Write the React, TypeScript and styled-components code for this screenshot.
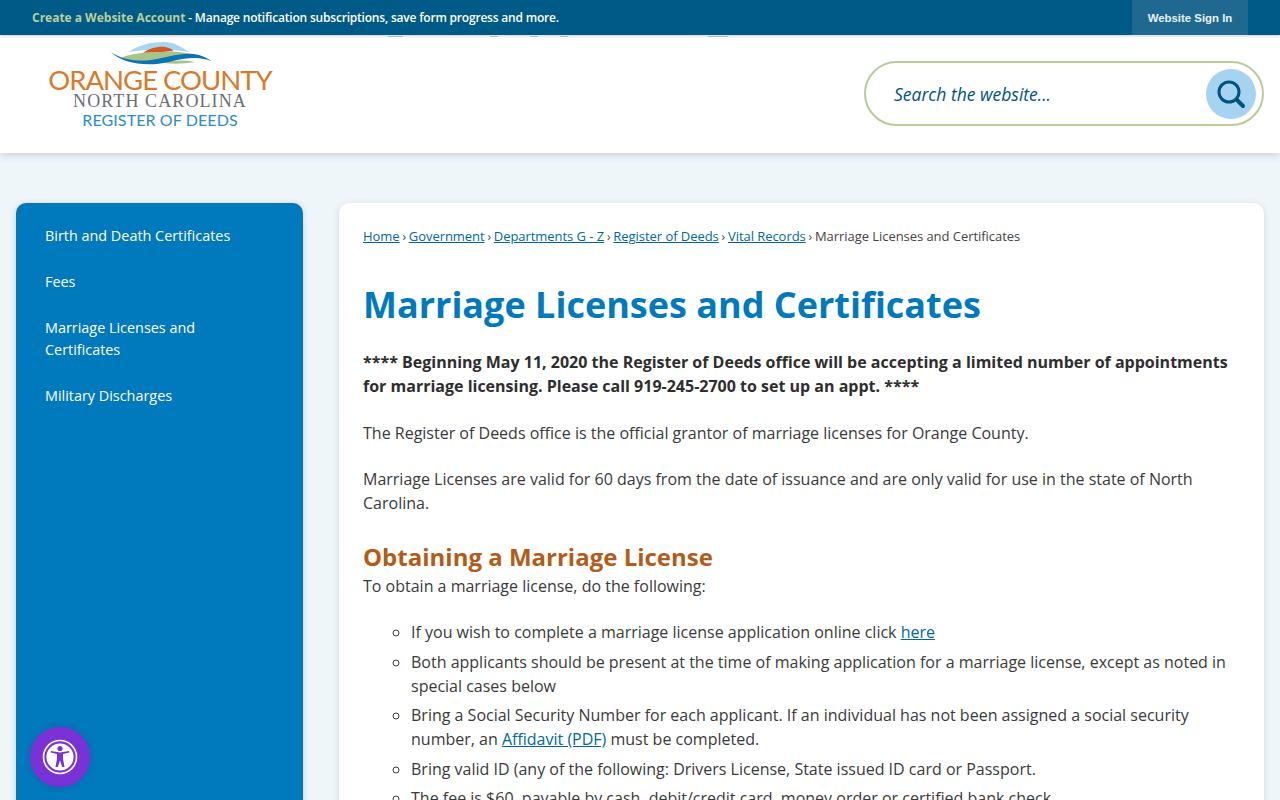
import React from "react";
import styled, { createGlobalStyle } from "styled-components";

const Global = createGlobalStyle`
  html, body { margin: 0; padding: 0; height: 800px; overflow: hidden; background: #eff6fa; }
  * { box-sizing: border-box; }
  body { font-family: "Open Sans", sans-serif; color: #333; }
`;

const Page = styled.div`
  width: 1280px;
  height: 800px;
  overflow: hidden;
  display: flex;
  flex-direction: column;
`;

const TopBar = styled.div`
  height: 35px;
  background: #005a87;
  display: flex;
  align-items: center;
  justify-content: space-between;
  padding: 0 32px;
  flex: none;
  position: relative;
  z-index: 2;
  box-shadow: 0 1px 3px rgba(0, 0, 0, 0.2);
`;

const Promo = styled.div`
  font-size: 12px;
  font-weight: 600;
  color: #fff;
  letter-spacing: -0.2px;
`;

const PromoLead = styled.span`
  color: #b8d09a;
  font-weight: 700;
  letter-spacing: -0.01px;
`;

const SignIn = styled.div`
  width: 116px;
  height: 35px;
  background: #1f6890;
  color: #e8f2f8;
  font-family: "Liberation Sans", sans-serif;
  font-size: 11.4px;
  font-weight: 700;
  display: flex;
  align-items: center;
  justify-content: center;
`;

const Header = styled.header`
  height: 118px;
  flex: none;
  position: relative;
  background: #fff;
  box-shadow: 0 2px 8px rgba(40, 60, 80, 0.2);
  display: flex;
  align-items: flex-start;
  justify-content: space-between;
  padding: 0 16px 0 48px;
`;

const NavRemnant = styled.span<{ $left: number; $width: number }>`
  position: absolute;
  top: 1px;
  left: ${(p) => p.$left}px;
  width: ${(p) => p.$width}px;
  height: 1px;
  background: #b4cede;
`;

const Logo = styled.div`
  width: 224px;
  display: flex;
  flex-direction: column;
  align-items: center;
  padding-top: 7px;
`;

const LogoMark = styled.svg`
  width: 100px;
  height: 24px;
  display: block;
  margin-left: 1px;
`;

const LogoTitle = styled.div`
  font-family: "Lato", sans-serif;
  font-size: 27.5px;
  line-height: 25px;
  color: #d97a2b;
  letter-spacing: -1px;
  margin-top: 1px;
  white-space: nowrap;
`;

const LogoState = styled.div`
  font-family: "Liberation Serif", serif;
  font-size: 18px;
  line-height: 17px;
  letter-spacing: 1.1px;
  color: #6b6e73;
  white-space: nowrap;
  margin-top: 1px;
`;

const LogoOffice = styled.div`
  font-family: "Lato", sans-serif;
  font-size: 16px;
  line-height: 21px;
  letter-spacing: 0.1px;
  color: #2b8cc9;
  white-space: nowrap;
  margin-top: -1px;
`;

const Search = styled.div`
  width: 400px;
  height: 65px;
  margin-top: 26px;
  border: 2px solid #b9cb98;
  border-radius: 33px;
  background: #fff;
  display: flex;
  align-items: center;
  justify-content: space-between;
  padding: 0 6px 0 28px;
`;

const SearchHint = styled.span`
  font-size: 17.5px;
  font-style: italic;
  color: #00527f;
`;

const SearchButton = styled.div`
  width: 50px;
  height: 50px;
  border-radius: 50%;
  background: #a6d3f0;
  display: flex;
  align-items: center;
  justify-content: center;
`;

const Body = styled.div`
  flex: 1;
  display: flex;
  align-items: flex-start;
  gap: 36px;
  padding: 50px 16px 0;
  min-height: 0;
`;

const Side = styled.nav`
  width: 287px;
  height: 700px;
  flex: none;
  background: #0079bd;
  border-radius: 10px 10px 0 0;
  padding: 10px 29px;
  display: flex;
  flex-direction: column;
  box-shadow: 0 1px 6px rgba(40, 60, 80, 0.2);
`;

const SideItem = styled.div`
  color: #fff;
  font-size: 14.4px;
  line-height: 22px;
  padding: 12px 0;
  font-weight: 500;
`;

const Main = styled.main`
  width: 925px;
  height: 800px;
  flex: none;
  background: #fff;
  border-radius: 10px 10px 0 0;
  padding: 24px 24px;
  box-shadow: 0 1px 6px rgba(40, 60, 80, 0.15);
`;

const Crumbs = styled.div`
  font-size: 13px;
  line-height: 18px;
  color: #444;
  letter-spacing: -0.05px;
`;

const CrumbSep = styled.span`
  font-size: 12px;
  margin: 0 -0.5px;
`;

const A = styled.a`
  color: #00689f;
  text-decoration: underline;
`;

const Title = styled.h1`
  margin: 36px 0 0;
  font-size: 36px;
  line-height: 46px;
  font-weight: 700;
  color: #0079bd;
`;

const P = styled.p`
  margin: 0 0 22px;
  font-size: 16px;
  line-height: 24px;
  color: #3a3a3a;
`;

const Notice = styled(P)`
  margin-top: 22px;
  margin-bottom: 23px;
  font-weight: 700;
  color: #2e2e2e;
`;

const Sub = styled.h2`
  margin: 27px 0 0;
  font-size: 24px;
  line-height: 30px;
  font-weight: 700;
  color: #b35c1a;
`;

const Intro = styled(P)`
  margin: 2px 0 22px;
`;

const List = styled.ul`
  margin: 0;
  padding: 0 0 0 48px;
  list-style: circle;
`;

const Item = styled.li`
  font-size: 16px;
  line-height: 24px;
  color: #3a3a3a;
  margin-bottom: 5.5px;
`;

const A11y = styled.div`
  position: absolute;
  left: 30px;
  top: 727px;
  width: 60px;
  height: 60px;
  border-radius: 50%;
  background: #7a32d6;
  display: flex;
  align-items: center;
  justify-content: center;
  box-shadow: 0 0 6px rgba(80, 40, 160, 0.4);
`;

const remnants = [
  { left: 388, width: 15 },
  { left: 490, width: 8 },
  { left: 530, width: 8 },
  { left: 560, width: 8 },
  { left: 708, width: 20 },
];

const crumbs = ["Home", "Government", "Departments G - Z", "Register of Deeds", "Vital Records"];

export default function App() {
  return (
    <Page>
      <Global />
      <TopBar>
        <Promo>
          <PromoLead>Create a Website Account</PromoLead> - Manage notification subscriptions, save form progress and more.
        </Promo>
        <SignIn>Website Sign In</SignIn>
      </TopBar>
      <Header>
        {remnants.map((r) => (
          <NavRemnant key={r.left} $left={r.left} $width={r.width} />
        ))}
        <Logo>
          <LogoMark viewBox="0 0 100 24">
            <path d="M18 10C27 3 40 0 52 0C64 0 70 5 78 10C60 7 36 7 18 10Z" fill="#a9d6ee" />
            <path d="M32 11C38 6 48 4 54 5C60 6 62 8 62 9C52 10 42 11 32 11Z" fill="#cf5a24" />
            <path d="M10 16C20 11 36 10 52 10C68 8 84 12 100 19C88 14 74 14 60 17C44 22 26 22 10 16Z" fill="#a9c489" />
            <path d="M52 21C62 18 72 18 84 20C74 22 62 22 52 21Z" fill="#a9c489" />
            <path d="M0 10C10 17 24 20 40 18C56 16 72 9 88 13C94 15 98 17 100 19C88 14 74 16 58 20C36 25 12 22 0 10Z" fill="#0a74b5" />
          </LogoMark>
          <LogoTitle>ORANGE COUNTY</LogoTitle>
          <LogoState>NORTH CAROLINA</LogoState>
          <LogoOffice>REGISTER OF DEEDS</LogoOffice>
        </Logo>
        <Search>
          <SearchHint>Search the website...</SearchHint>
          <SearchButton>
            <svg width="30" height="30" viewBox="0 0 30 30" fill="none">
              <circle cx="13" cy="13" r="10" stroke="#00527f" strokeWidth="3" />
              <path d="M20.5 20.5L27 27" stroke="#00527f" strokeWidth="4" strokeLinecap="round" />
            </svg>
          </SearchButton>
        </Search>
      </Header>
      <Body>
        <Side>
          <SideItem>Birth and Death Certificates</SideItem>
          <SideItem>Fees</SideItem>
          <SideItem>Marriage Licenses and<br />Certificates</SideItem>
          <SideItem>Military Discharges</SideItem>
        </Side>
        <Main>
          <Crumbs>
            {crumbs.map((c) => (
              <React.Fragment key={c}>
                <A>{c}</A> <CrumbSep>›</CrumbSep>{" "}
              </React.Fragment>
            ))}
            Marriage Licenses and Certificates
          </Crumbs>
          <Title>Marriage Licenses and Certificates</Title>
          <Notice>**** Beginning May 11, 2020 the Register of Deeds office will be accepting a limited number of appointments for marriage licensing. Please call 919-245-2700 to set up an appt. ****</Notice>
          <P>The Register of Deeds office is the official grantor of marriage licenses for Orange County.</P>
          <P>Marriage Licenses are valid for 60 days from the date of issuance and are only valid for use in the state of North Carolina.</P>
          <Sub>Obtaining a Marriage License</Sub>
          <Intro>To obtain a marriage license, do the following:</Intro>
          <List>
            <Item>If you wish to complete a marriage license application online click <A>here</A></Item>
            <Item>Both applicants should be present at the time of making application for a marriage license, except as noted in special cases below</Item>
            <Item>Bring a Social Security Number for each applicant. If an individual has not been assigned a social security number, an <A>Affidavit (PDF)</A> must be completed.</Item>
            <Item>Bring valid ID (any of the following: Drivers License, State issued ID card or Passport.</Item>
            <Item>The fee is $60, payable by cash, debit/credit card, money order or certified bank check</Item>
          </List>
        </Main>
      </Body>
      <A11y>
        <svg width="36" height="36" viewBox="0 0 36 36" fill="none">
          <circle cx="18" cy="18" r="16.5" stroke="#fff" strokeWidth="1.6" />
          <circle cx="18" cy="18" r="13.6" fill="#fff" />
          <circle cx="18" cy="9.5" r="2.6" fill="#7a32d6" />
          <path d="M8.5 13.5L15 15V19.5L13.5 28H15.8L18 21.5L20.2 28H22.5L21 19.5V15L27.5 13.5L27 12L18 13.5L9 12Z" fill="#7a32d6" />
        </svg>
      </A11y>
    </Page>
  );
}
